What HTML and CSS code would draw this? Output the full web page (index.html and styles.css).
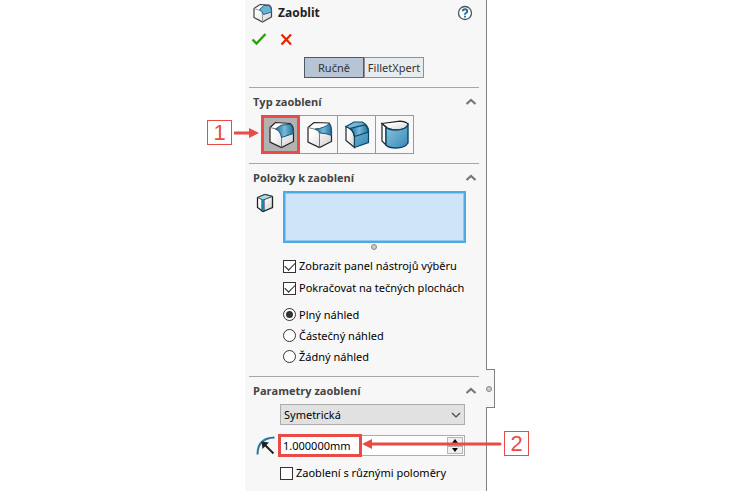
FILE: index.html
```html
<!DOCTYPE html>
<html lang="cs">
<head>
    <meta charset="UTF-8">
    <meta name="viewport" content="width=device-width, initial-scale=1.0">
    <title>Zaoblit</title>
    <link rel="stylesheet" href="styles.css">
</head>
<body>
    <!-- shared gradients -->
    <svg class="defs" width="0" height="0" aria-hidden="true">
        <defs>
            <linearGradient id="blue" x1="0" y1="0" x2="1" y2="1">
                <stop offset="0" stop-color="#8cc6e2"/>
                <stop offset="1" stop-color="#3788b3"/>
            </linearGradient>
            <linearGradient id="sheen" x1="0" y1="0" x2="1" y2="0">
                <stop offset="0" stop-color="#1d6a94"/>
                <stop offset="0.5" stop-color="#78b8d8"/>
                <stop offset="1" stop-color="#226f99"/>
            </linearGradient>
            <linearGradient id="white" x1="0" y1="0" x2="1" y2="1">
                <stop offset="0.3" stop-color="#ffffff"/>
                <stop offset="1" stop-color="#cfcfcf"/>
            </linearGradient>
        </defs>
    </svg>

    <main class="panel">
        <header class="title-bar">
            <svg class="title-icon" width="20" height="20" viewBox="0 0 20 20">
                <path d="M1 5.5 7 1.5 16 2Q18.5 3.5 18.5 7V14L9.5 19 1 14.5Z" fill="url(#white)" stroke="#444" stroke-width="1.2"/>
                <path d="M1 5.5 7 7.5Q9.5 9 9.5 12V19" fill="none" stroke="#999"/>
                <path d="M6.5 6.5 11 2.5 16 2.5Q18.5 4 18.5 9L10.5 11.5Q10 8 6.5 6.5Z" fill="#6db2d4" stroke="#1d678f"/>
            </svg>
            <h1>Zaoblit</h1>
            <button class="icon-btn help" aria-label="Nápověda">
                <svg width="16" height="16" viewBox="0 0 16 16">
                    <circle cx="8" cy="8" r="6.5" fill="#fff" stroke="#4c5358" stroke-width="1.3"/>
                    <path d="M5.7 6.3Q5.8 4.2 8 4.2T10.3 6.2Q10.3 7.2 9 8T8 9.8" fill="none" stroke="#1b6d97" stroke-width="1.9"/>
                    <path d="M7.1 10.8h1.8v1.7H7.1z" fill="#1b6d97"/>
                </svg>
            </button>
        </header>

        <div class="confirm">
            <button class="icon-btn" aria-label="OK">
                <svg width="16" height="14" viewBox="0 0 16 14">
                    <path d="M1.5 7.5 5.5 11.5 14.5 2" fill="none" stroke="#2f9e0e" stroke-width="2.4"/>
                </svg>
            </button>
            <button class="icon-btn" aria-label="Storno">
                <svg width="14" height="14" viewBox="0 0 14 14">
                    <path d="M2.5 2.5 12 12.5M12 2.5 2.5 12.5" stroke="#e32400" stroke-width="2.2"/>
                </svg>
            </button>
        </div>

        <div class="tabs">
            <button class="tab active">Ručně</button>
            <button class="tab">FilletXpert</button>
        </div>

        <section class="group">
            <div class="group-head">
                <h2>Typ zaoblení</h2>
                <button class="icon-btn" aria-label="Sbalit">
                    <svg width="12" height="8" viewBox="0 0 12 8"><path d="M1.5 6 6 2 10.5 6" fill="none" stroke="#777" stroke-width="2.2"/></svg>
                </button>
            </div>
            <div class="types">
                <button class="type selected" aria-label="Zaoblení s konstantní velikostí">
                    <svg width="28" height="28" viewBox="0 0 28 28">
                        <path d="M3 6.5 8.5 1.5 23 2.5Q26.5 5 26.5 10V20.5L14.5 26.5 3 21Z" fill="url(#white)" stroke="#222" stroke-width="1.2"/>
                        <path d="M3 6.5 9 8Q14 10 14.5 16V26.5" fill="none" stroke="#777" stroke-width="1"/>
                        <path d="M8.5 8 14.5 4 23.5 3.5Q26.5 6 26.5 12.5L14.5 16.5Q13.5 10 8.5 8Z" fill="url(#sheen)" stroke="#16587c" stroke-width="1"/>
                    </svg>
                </button>
                <button class="type" aria-label="Zaoblení s proměnnou velikostí">
                    <svg width="28" height="28" viewBox="0 0 28 28">
                        <path d="M3 6.5 9 1.5 24 2Q26.5 5 26.5 10V20.5L14.5 26.5 3 21Z" fill="url(#white)" stroke="#222" stroke-width="1.2"/>
                        <path d="M3 6.5 11 8.5Q14.5 10 14.5 13V26.5" fill="none" stroke="#777" stroke-width="1"/>
                        <path d="M10 8Q19 7.5 24.5 2.5 26.5 6 26.5 14.5 21 12 15 12 14 9 10 8Z" fill="url(#sheen)" stroke="#16587c" stroke-width="1"/>
                    </svg>
                </button>
                <button class="type" aria-label="Zaoblení plochy">
                    <svg width="28" height="28" viewBox="0 0 28 28">
                        <path d="M3 5.5V19.5L11.5 26.5V15Q10 8 3 5.5Z" fill="url(#white)" stroke="#222" stroke-width="1.2"/>
                        <path d="M3 5.5 11 1H19Q25.5 4 25.5 10V21.5L11.5 26.5V15.5Q10 8 3 5.5Z" fill="url(#blue)" stroke="#0b4668" stroke-width="1.2"/>
                        <path d="M7 7.5Q11 10 11.5 15.5L25.5 11Q25 6 21.5 4Z" fill="url(#sheen)" stroke="#0b4668" stroke-width="1.2"/>
                    </svg>
                </button>
                <button class="type" aria-label="Plné zaoblení">
                    <svg width="30" height="30" viewBox="0 0 30 30">
                        <path d="M2 3.5 6 7V25L2 21Z" fill="#fff" stroke="#222" stroke-width="1.2"/>
                        <path d="M2 3.5 20 1.2Q28 2 28 5 25 10 16 10 8.5 10 6 7Z" fill="url(#white)" stroke="#222" stroke-width="1.2"/>
                        <path d="M6 7Q8.5 10 16 10 25 10 28 5V23Q25 28 16 28 8.5 28 6 25Z" fill="url(#blue)" stroke="#0b4668" stroke-width="1.4"/>
                    </svg>
                </button>
                <div class="callout callout-left">
                    <span class="callout-num">1</span>
                    <svg class="arrow" width="26" height="10" viewBox="0 0 26 10"><path d="M1 5H18" stroke="#e94b47" stroke-width="3" stroke-linecap="round"/><path d="M15 0V10L25 5Z" fill="#e94b47"/></svg>
                </div>
            </div>
        </section>

        <section class="group">
            <div class="group-head">
                <h2>Položky k zaoblení</h2>
                <button class="icon-btn" aria-label="Sbalit">
                    <svg width="12" height="8" viewBox="0 0 12 8"><path d="M1.5 6 6 2 10.5 6" fill="none" stroke="#777" stroke-width="2.2"/></svg>
                </button>
            </div>
            <div class="selection">
                <svg width="18" height="24" viewBox="0 -3 18 24">
                    <path d="M1.5 3.5 9 .5 16.5 2.5V13.5L7 17.5 1.5 13.5Z" fill="url(#white)" stroke="#222" stroke-width="1.3"/>
                    <path d="M1.5 3.5 9 .5 16.5 2.5 7 6Z" fill="#a4dcf2" stroke="#444" stroke-width="1"/>
                    <path d="M7 6V17.5" stroke="#123" stroke-width="3"/>
                    <path d="M7 6V17" stroke="#1c9ad6" stroke-width="1.6"/>
                </svg>
                <textarea class="selection-list" aria-label="Hrany, plochy, prvky a smyčky"></textarea>
            </div>
            <div class="grip-row"><span class="grip"></span></div>
            <div class="options">
                <label class="check"><input type="checkbox" checked>Zobrazit panel nástrojů výběru</label>
                <label class="check"><input type="checkbox" checked>Pokračovat na tečných plochách</label>
            </div>
            <div class="options radios">
                <label class="check"><input type="radio" name="preview" checked>Plný náhled</label>
                <label class="check"><input type="radio" name="preview">Částečný náhled</label>
                <label class="check"><input type="radio" name="preview">Žádný náhled</label>
            </div>
        </section>

        <section class="group">
            <div class="group-head">
                <h2>Parametry zaoblení</h2>
                <button class="icon-btn" aria-label="Sbalit">
                    <svg width="12" height="8" viewBox="0 0 12 8"><path d="M1.5 6 6 2 10.5 6" fill="none" stroke="#777" stroke-width="2.2"/></svg>
                </button>
            </div>
            <div class="params">
                <div class="select-wrap">
                    <select aria-label="Metoda zaoblení">
                        <option>Symetrická</option>
                    </select>
                    <svg class="select-arrow" width="10" height="6" viewBox="0 0 10 6"><path d="M1 1 5 5 9 1" fill="none" stroke="#444" stroke-width="1.2"/></svg>
                </div>
                <div class="radius">
                    <svg class="radius-icon" width="20" height="20" viewBox="0 0 20 20">
                        <path d="M1.5 18.5Q1.5 2 18.5 1.5" fill="none" stroke="#26779f" stroke-width="2"/>
                        <path d="M8 8 17.5 17.5" stroke="#222" stroke-width="2"/>
                        <path d="M5.5 5.5 13 6.5 6.5 13Z" fill="#222"/>
                    </svg>
                    <input class="radius-input" type="text" value="1.000000mm" aria-label="Poloměr">
                    <div class="spin">
                        <button aria-label="Zvýšit"><svg width="6" height="4" viewBox="0 0 6 4"><path d="M0 4 3 0 6 4Z"/></svg></button>
                        <button aria-label="Snížit"><svg width="6" height="4" viewBox="0 0 6 4"><path d="M0 0 3 4 6 0Z"/></svg></button>
                    </div>
                    <div class="marker"></div>
                    <div class="callout callout-right">
                        <svg class="arrow" width="140" height="10" viewBox="0 0 140 10"><path d="M8 5H138" stroke="#e94b47" stroke-width="3" stroke-linecap="round"/><path d="M10 0V10L0 5Z" fill="#e94b47"/></svg>
                        <span class="callout-num">2</span>
                    </div>
                </div>
                <label class="check"><input type="checkbox">Zaoblení s různými poloměry</label>
            </div>
        </section>

        <div class="splitter"><span class="grip"></span></div>
    </main>
</body>
</html>
```
FILE: styles.css
```css
* {
    margin: 0;
    padding: 0;
    box-sizing: border-box;
}

body {
    font-family: 'Noto Sans', 'Open Sans', sans-serif;
    font-size: 11px;
    line-height: 16px;
    color: #000;
    background: #fff;
    min-height: 100vh;
    display: flex;
    justify-content: center;
    padding-right: 18px;
}

.defs {
    position: absolute;
}

svg {
    display: block;
    flex: none;
}

button,
input,
select,
textarea {
    font: inherit;
    color: inherit;
}

.panel {
    position: relative;
    width: 33%;
    min-width: 242px;
    background: #f7f7f7;
    border-right: 1px solid #808080;
}

.icon-btn {
    border: none;
    background: none;
}

.title-bar {
    display: flex;
    align-items: center;
    gap: 5px;
    height: 25px;
    padding: 0 13px 0 8px;
}

h1 {
    flex: 1;
    font-family: 'Open Sans', 'Noto Sans', sans-serif;
    font-size: 12px;
    font-weight: 700;
    color: #222;
}

.confirm {
    display: flex;
    align-items: center;
    gap: 12px;
    height: 28px;
    padding-left: 6px;
}

.tabs {
    display: flex;
    justify-content: center;
    padding: 4px 3px 9px 0;
}

.tab {
    width: 60px;
    height: 21px;
    border: 1px solid #909090;
    background: #e9ecef;
    color: #333;
}

.tab.active {
    background: #b6c4d5;
    border-color: #4d5a66;
}

.group {
    margin: 0 7px 0 4px;
    border-top: 1px solid #a6a6a6;
}

.group-head {
    display: flex;
    justify-content: space-between;
    align-items: center;
    height: 27px;
    padding: 0 2px 0 4px;
}

h2 {
    font-family: 'Open Sans', 'Noto Sans', sans-serif;
    font-size: 11px;
    font-weight: 700;
    color: #444;
}

.types {
    position: relative;
    display: flex;
    padding: 0 0 9px 12px;
}

.type {
    display: flex;
    align-items: center;
    justify-content: center;
    width: 39px;
    height: 39px;
    margin-right: -1px;
    border: 1px solid #999;
    background: #f8f8f8;
}

.type.selected {
    position: relative;
    background: #b2b2b2;
    border: 3px solid #e94b47;
}

.selection {
    display: flex;
    align-items: flex-start;
    gap: 9px;
    padding: 0 13px 0 7px;
}

.selection-list {
    flex: 1;
    min-width: 0;
    height: 52px;
    border: 2px solid #4daae2;
    box-shadow: inset 0 0 0 1px #92c5ef;
    background: #cfe4f9;
    resize: none;
    outline: none;
}

.grip-row {
    display: flex;
    justify-content: center;
    padding: 1px 0 5px 19px;
}

.grip {
    width: 6px;
    height: 6px;
    border: 1px solid #888;
    border-radius: 50%;
    background: #ccc;
}

.options {
    padding: 0 0 5px 34px;
}

.radios {
    padding-bottom: 9px;
}

.check {
    display: flex;
    align-items: center;
    gap: 3px;
    height: 22px;
    white-space: nowrap;
}

.radios .check {
    height: 21px;
}

.check input {
    appearance: none;
    flex: none;
    display: grid;
    place-items: center;
    width: 13px;
    height: 13px;
    border: 1px solid #333;
    background: #fff;
}

.check input[type="radio"] {
    border-radius: 50%;
}

.check input[type="checkbox"]:checked::before {
    content: '';
    width: 9px;
    height: 5px;
    margin-bottom: 3px;
    border-left: 1px solid #222;
    border-bottom: 1px solid #222;
    transform: rotate(-45deg);
}

.check input[type="radio"]:checked::before {
    content: '';
    width: 7px;
    height: 7px;
    border-radius: 50%;
    background: #333;
}

.params {
    padding: 0 14px 0 31px;
}

.select-wrap {
    position: relative;
    margin-bottom: 10px;
}

select {
    display: block;
    appearance: none;
    width: 100%;
    height: 21px;
    padding: 0 20px 0 3px;
    border: 1px solid #adadad;
    background: #e1e1e1;
}

.select-arrow {
    position: absolute;
    right: 4px;
    top: 8px;
    pointer-events: none;
}

.radius {
    position: relative;
    display: flex;
    height: 21px;
    margin-bottom: 6px;
    border: 1px solid #adadad;
    background: #fff;
}

.radius-icon {
    position: absolute;
    left: -25px;
    top: 0;
}

.radius-input {
    flex: 1;
    min-width: 0;
    padding-left: 2px;
    border: none;
    background: none;
    outline: none;
}

.spin {
    display: flex;
    flex-direction: column;
    width: 17px;
    padding: 1px 1px 1px 0;
}

.spin button {
    flex: 1;
    display: flex;
    align-items: center;
    justify-content: center;
    border: 1px solid #b5b5b5;
    background: #f0f0f0;
}

/* red instruction marks */
.marker {
    position: absolute;
    left: -3px;
    top: -2px;
    width: 84px;
    height: 23px;
    border: 3px solid #e94b47;
    pointer-events: none;
}

.callout {
    position: absolute;
    display: flex;
    align-items: center;
    gap: 2px;
}

.callout-num {
    width: 25px;
    height: 25px;
    border: 1px solid #e94b47;
    background: #fff;
    color: #e94b47;
    font: 22px/23px 'Liberation Sans', Arial, sans-serif;
    text-align: center;
}

.callout-left {
    right: 100%;
    top: 5px;
    margin-right: -11px;
}

.callout-right {
    left: 81px;
    top: -5px;
}

.splitter {
    position: absolute;
    left: 100%;
    top: 369px;
    display: flex;
    align-items: center;
    width: 9px;
    height: 39px;
    border: 1px solid #808080;
    border-left: none;
    background: #f7f7f7;
}
```
